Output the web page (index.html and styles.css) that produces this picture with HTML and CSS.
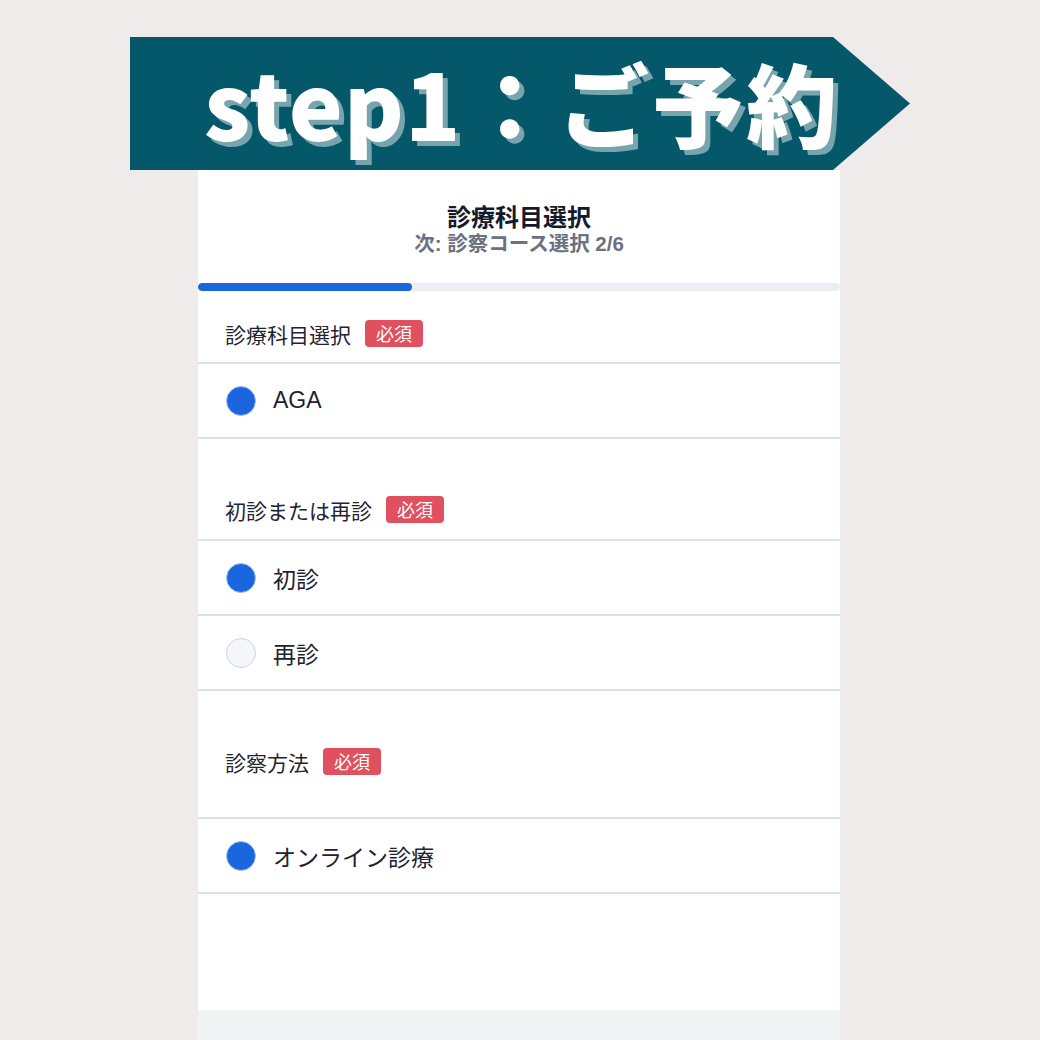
FILE: index.html
```html
<!DOCTYPE html>
<html lang="ja">
<head>
<meta charset="utf-8">
<link rel="stylesheet" href="styles.css">
</head>
<body>
<div class="page">
  <div class="banner"><span class="banner-text">step1<span class="jp">：ご予約</span></span></div>
  <div class="card">
    <div class="head">
      <div class="title">診療科目選択</div>
      <div class="sub">次: 診察コース選択 2/6</div>
    </div>
    <div class="progress"><div class="fill" style="width:33.3%"></div></div>

    <div class="section first">
      <div class="label">診療科目選択<span class="badge">必須</span></div>
    </div>
    <div class="options">
      <div class="row"><span class="radio on"></span><span class="opt">AGA</span></div>
    </div>

    <div class="section">
      <div class="label">初診または再診<span class="badge">必須</span></div>
    </div>
    <div class="options">
      <div class="row"><span class="radio on"></span><span class="opt">初診</span></div>
      <div class="row"><span class="radio"></span><span class="opt">再診</span></div>
    </div>

    <div class="section tall">
      <div class="label">診察方法<span class="badge">必須</span></div>
    </div>
    <div class="options">
      <div class="row"><span class="radio on"></span><span class="opt">オンライン診療</span></div>
    </div>
    <div class="spacer"></div>
  </div>
  <div class="footer"></div>
</div>
</body>
</html>
```

FILE: styles.css
```css
html, body {
  margin: 0;
  padding: 0;
  background: #efebea;
  font-family: "Liberation Sans", "Noto Sans CJK JP", sans-serif;
}
.page {
  width: 1040px;
  height: 1040px;
  overflow: hidden;
  position: relative;
}
.banner {
  position: absolute;
  left: 130px;
  top: 37px;
  width: 780px;
  height: 133px;
  background: #045869;
  clip-path: polygon(0 0, 703px 0, 100% 50%, 703px 100%, 0 100%);
  z-index: 2;
  display: flex;
  align-items: center;
}
.banner-text {
  margin-left: 74px;
  margin-top: -4px;
  font-family: "Noto Sans CJK JP", sans-serif;
  font-weight: 900;
  font-size: 91px;
  line-height: 1;
  color: #ffffff;
  letter-spacing: 1px;
  text-shadow: 5px 5px 0 #78a4ae;
  white-space: nowrap;
}
.banner-text .jp {
  letter-spacing: 3px;
  margin-left: 3px;
}
.card {
  margin-left: 198px;
  margin-top: 170px;
  width: 642px;
  height: 840px;
  background: #ffffff;
  display: flex;
  flex-direction: column;
}
.head {
  padding-top: 31px;
  padding-bottom: 26px;
  text-align: center;
  font-family: "Noto Sans CJK JP", sans-serif;
}
.title {
  font-size: 24px;
  line-height: 30px;
  font-weight: 700;
  color: #141a2b;
}
.sub {
  font-family: "Liberation Sans", "Noto Sans CJK JP", sans-serif;
  font-size: 20.5px;
  line-height: 26px;
  font-weight: 700;
  color: #6b7180;
}
.progress {
  height: 8px;
  border-radius: 4px;
  background: #eceef5;
  overflow: hidden;
}
.fill {
  height: 100%;
  background: #1a66de;
  border-radius: 4px;
}
.section {
  padding: 57px 27px 16px;
}
.section.first {
  padding-top: 29px;
  padding-bottom: 15px;
}
.section.tall {
  padding-bottom: 42px;
}
.label {
  display: flex;
  align-items: center;
  height: 27px;
  font-family: "Noto Sans CJK JP", sans-serif;
  font-size: 21px;
  color: #1f2433;
}
.badge {
  margin-left: 14px;
  height: 27px;
  line-height: 27px;
  padding: 0 11px;
  border-radius: 4px;
  background: #e0505f;
  color: #ffffff;
  font-size: 18px;
}
.options {
  border-top: 2px solid #dde0e7;
}
.row {
  height: 73px;
  border-bottom: 2px solid #dde0e7;
  display: flex;
  align-items: center;
  padding-left: 28px;
}
.radio {
  width: 28px;
  height: 28px;
  border-radius: 50%;
  border: 1px solid #cfd3dc;
  background: #f5f6fa;
  flex: none;
}
.radio.on {
  background: #1a66de;
  border-color: #a9c4f0;
}
.opt {
  margin-left: 17px;
  font-size: 23px;
  color: #1e2230;
  font-family: "Liberation Sans", "Noto Sans CJK JP", sans-serif;
}
.spacer {
  flex: 1;
}
.footer {
  margin-left: 198px;
  width: 642px;
  height: 30px;
  background: #f2f3f5;
}
```
